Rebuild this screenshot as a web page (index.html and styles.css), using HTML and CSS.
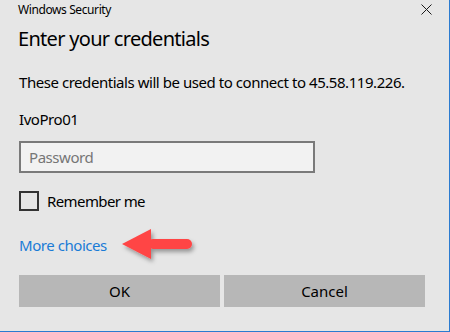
FILE: index.html
```html
<!DOCTYPE html>
<html lang="en">
<head>
    <meta charset="UTF-8">
    <meta name="viewport" content="width=device-width, initial-scale=1.0">
    <title>Windows Security</title>
    <link rel="stylesheet" href="styles.css">
</head>
<body>
    <div class="dialog">
        <div class="titlebar">
            <span class="app-name">Windows Security</span>
            <svg class="close" width="11" height="11" viewBox="0 0 11 11">
                <path d="M0.5 0.5 L10.5 10.5 M10.5 0.5 L0.5 10.5" stroke="#1a1a1a" stroke-width="1" fill="none"/>
            </svg>
        </div>

        <h1>Enter your credentials</h1>
        <p class="info">These credentials will be used to connect to 45.58.119.226.</p>
        <p class="user">IvoPro01</p>

        <input type="password" class="password" placeholder="Password">

        <label class="remember">
            <span class="checkbox"></span>
            <span>Remember me</span>
        </label>

        <a class="more" href="#">More choices</a>

        <div class="buttons">
            <button>OK</button>
            <button>Cancel</button>
        </div>

        <!-- annotation arrow drawn over the dialog -->
        <svg class="arrow" width="90" height="46" viewBox="0 0 90 46">
            <defs>
                <filter id="shadow" x="-20%" y="-20%" width="150%" height="160%">
                    <feDropShadow dx="2" dy="3" stdDeviation="2" flood-color="#000" flood-opacity="0.35"/>
                </filter>
            </defs>
            <g filter="url(#shadow)" fill="#ff4545">
                <polygon points="7,20 36,5 36,35"/>
                <rect x="33" y="15" width="44" height="10" rx="5"/>
            </g>
        </svg>
    </div>
</body>
</html>
```

FILE: styles.css
```css
body {
    margin: 0;
    background: #e6e6e6;
    font-family: "Noto Sans", "Open Sans", sans-serif;
    color: #000;
    letter-spacing: -0.45px;
}
.dialog {
    position: relative;
    box-sizing: border-box;
    width: 450px;
    height: 332px;
    border-right: 1px solid #2b7bd0;
    border-bottom: 1px solid #2b7bd0;
    padding: 0 0 0 19px;
}
.titlebar {
    display: flex;
    justify-content: space-between;
    align-items: center;
    padding: 0 17px 0 0;
    height: 18px;
    margin-left: -1px;
}
.app-name {
    font-size: 12px;
    line-height: 16px;
    letter-spacing: -0.4px;
    margin-top: 2px;
}
h1 {
    margin: 7px 0 0 -1px;
    font-size: 20px;
    font-weight: normal;
    line-height: 28px;
    letter-spacing: -0.7px;
}
.info {
    margin: 19px 0 0;
    font-size: 15px;
    line-height: 20px;
}
.user {
    margin: 17px 0 0;
    font-size: 15px;
    line-height: 20px;
}
.password {
    display: block;
    margin-top: 12px;
    width: 296px;
    height: 32px;
    box-sizing: border-box;
    border: 2px solid #7a7a7a;
    background: #f2f2f2;
    padding: 0 8px;
    font-family: inherit;
    font-size: 15px;
    letter-spacing: -0.45px;
    outline: none;
}
.password::placeholder {
    color: #767676;
}
.remember {
    display: flex;
    align-items: center;
    gap: 8px;
    margin-top: 18px;
    height: 20px;
    font-size: 15px;
    line-height: 20px;
    letter-spacing: -0.6px;
}
.checkbox {
    width: 20px;
    height: 20px;
    box-sizing: border-box;
    border: 2px solid #333;
}
.more {
    display: block;
    width: max-content;
    margin-top: 24px;
    font-size: 15px;
    line-height: 20px;
    color: #1a7bd6;
    text-decoration: none;
}
.buttons {
    display: flex;
    gap: 4px;
    margin-top: 20px;
}
.buttons button {
    width: 201px;
    height: 32px;
    border: none;
    background: #b7b7b7;
    font-family: inherit;
    font-size: 15px;
    color: #000;
    padding: 0;
}
.arrow {
    position: absolute;
    left: 115px;
    top: 224px;
}
```
